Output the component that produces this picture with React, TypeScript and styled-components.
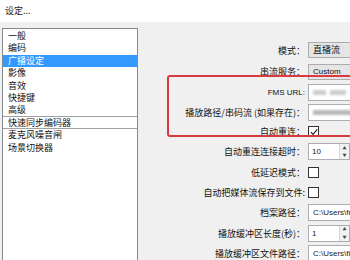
import React from "react";
import styled, { createGlobalStyle } from "styled-components";

const Global = createGlobalStyle`
  html, body {
    margin: 0;
    padding: 0;
    background: #f0f0f0;
  }
  #root {
    width: 350px;
    height: 260px;
    overflow: hidden;
  }
`;

const CJK = `"Noto Sans CJK SC", "Liberation Sans", sans-serif`;
const LATIN = `"Liberation Sans", "Noto Sans CJK SC", sans-serif`;

const navItems = [
  { label: "一般" },
  { label: "编码" },
  { label: "广播设定", active: true },
  { label: "影像" },
  { label: "音效" },
  { label: "快捷键" },
  { label: "高级", divider: true },
  { label: "快速同步编码器", divider: true },
  { label: "麦克风噪音闸" },
  { label: "场景切换器" },
];

const App: React.FC = () => {
  return (
    <Window>
      <Global />
      <TitleBar>设定...</TitleBar>
      <Body>
        <NavList>
          {navItems.map((item) => (
            <NavItem
              key={item.label}
              $active={item.active}
              $divider={item.divider}
            >
              {item.label}
            </NavItem>
          ))}
        </NavList>
        <Form>
          <Label>模式：</Label>
          <Field>
            <Combo>直播流</Combo>
          </Field>

          <Label>串流服务：</Label>
          <Field>
            <Combo $latin>Custom</Combo>
          </Field>

          <Label $latin>FMS URL:</Label>
          <Field>
            <TextBox>
              <Blur $w={13} />
              <Blur $w={16} />
            </TextBox>
          </Field>

          <Label>播放路径/串码流 (如果存在)：</Label>
          <Field>
            <TextBox>
              <Blur $w={40} $dark />
            </TextBox>
          </Field>

          <Label>自动重连：</Label>
          <Field>
            <Check $checked>
              <svg width="8" height="8" viewBox="0 0 8 8">
                <polyline
                  points="0.8,4.2 3,6.4 7.3,1.3"
                  fill="none"
                  stroke="#222"
                  strokeWidth="1.1"
                />
              </svg>
            </Check>
          </Field>

          <Label>自动重连连接超时：</Label>
          <Field>
            <Spin>
              <SpinValue>10</SpinValue>
              <SpinButtons>
                <SpinArrow>▲</SpinArrow>
                <SpinArrow>▼</SpinArrow>
              </SpinButtons>
            </Spin>
          </Field>

          <Label>低延迟模式：</Label>
          <Field>
            <Check />
          </Field>

          <Label>自动把媒体流保存到文件:</Label>
          <Field>
            <Check />
          </Field>

          <Label>档案路径：</Label>
          <Field>
            <TextBox $latin>C:\Users\fr</TextBox>
          </Field>

          <Label>播放缓冲区长度(秒)：</Label>
          <Field>
            <Spin>
              <SpinValue>1</SpinValue>
              <SpinButtons>
                <SpinArrow>▲</SpinArrow>
                <SpinArrow>▼</SpinArrow>
              </SpinButtons>
            </Spin>
          </Field>

          <Label>播放缓冲区文件路径：</Label>
          <Field>
            <TextBox $latin>C:\Users\fi</TextBox>
          </Field>
        </Form>
      </Body>
      <Highlight />
    </Window>
  );
};

const Window = styled.div`
  position: relative;
  width: 350px;
  height: 260px;
  display: flex;
  flex-direction: column;
  background: #f0f0f0;
  color: #111;
  font-family: ${CJK};
  overflow: hidden;
`;

const TitleBar = styled.div`
  height: 22px;
  flex: none;
  background: #fff;
  padding-left: 5px;
  font-size: 9px;
  line-height: 22px;
  color: #222;
`;

const Body = styled.div`
  flex: 1;
  display: flex;
  align-items: flex-start;
  padding-top: 6px;
`;

const NavList = styled.div`
  flex: none;
  width: 134px;
  height: 260px;
  margin-left: 2px;
  padding-top: 1px;
  background: #fff;
  border: 1px solid #828790;
`;

const NavItem = styled.div<{ $active?: boolean; $divider?: boolean }>`
  height: 12.4px;
  box-sizing: border-box;
  padding-left: 5px;
  font-size: 9px;
  line-height: 12px;
  white-space: nowrap;
  color: ${(p) => (p.$active ? "#fff" : "#111")};
  background: ${(p) => (p.$active ? "#3399ff" : "transparent")};
  border-bottom: ${(p) => (p.$divider ? "1px solid #a0a0a0" : "none")};
`;

const Form = styled.div`
  flex: none;
  display: grid;
  grid-template-columns: 167px 90px;
  grid-template-rows: 22px 21px 21px 19px 19px 21px 20px 20px 21px 20px 20px;
  column-gap: 3px;
  margin-top: 11px;
`;

const Label = styled.div<{ $latin?: boolean }>`
  display: flex;
  align-items: center;
  justify-content: flex-end;
  white-space: nowrap;
  font-family: ${(p) => (p.$latin ? LATIN : CJK)};
  font-size: ${(p) => (p.$latin ? "8px" : "9px")};
  color: #111;
`;

const Field = styled.div`
  display: flex;
  align-items: center;
`;

const Combo = styled.div<{ $latin?: boolean }>`
  width: 90px;
  height: 16px;
  box-sizing: border-box;
  padding-left: 4px;
  background: #e5e5e5;
  border: 1px solid #acacac;
  font-family: ${(p) => (p.$latin ? LATIN : CJK)};
  font-size: ${(p) => (p.$latin ? "8px" : "9px")};
  line-height: 14px;
  color: #111;
`;

const TextBox = styled.div<{ $latin?: boolean }>`
  width: 90px;
  height: 17px;
  box-sizing: border-box;
  display: flex;
  align-items: center;
  gap: 4px;
  padding-left: 4px;
  background: #fff;
  border: 1px solid #abadb3;
  font-family: ${(p) => (p.$latin ? LATIN : CJK)};
  font-size: 8px;
  color: #222;
  white-space: nowrap;
`;

const Blur = styled.span<{ $w: number; $dark?: boolean }>`
  display: block;
  width: ${(p) => p.$w}px;
  height: 5px;
  background: ${(p) => (p.$dark ? "#b9b9b9" : "#cdcdcd")};
  filter: blur(1.2px);
`;

const Check = styled.div<{ $checked?: boolean }>`
  width: 11px;
  height: 11px;
  box-sizing: border-box;
  display: flex;
  align-items: center;
  justify-content: center;
  background: #fff;
  border: 1px solid #333;
`;

const Spin = styled.div`
  width: 42px;
  height: 17px;
  box-sizing: border-box;
  display: flex;
  background: #fff;
  border: 1px solid #abadb3;
`;

const SpinValue = styled.div`
  flex: 1;
  padding-left: 3px;
  font-family: ${LATIN};
  font-size: 8px;
  line-height: 15px;
  color: #222;
`;

const SpinButtons = styled.div`
  width: 9px;
  display: flex;
  flex-direction: column;
  border-left: 1px solid #d4d4d4;
  background: #f2f2f2;
`;

const SpinArrow = styled.div`
  flex: 1;
  display: flex;
  align-items: center;
  justify-content: center;
  font-size: 4px;
  line-height: 1;
  color: #444;
`;

const Highlight = styled.div`
  position: absolute;
  left: 167px;
  top: 75px;
  width: 200px;
  height: 62px;
  box-sizing: border-box;
  border: 2px solid #d93a40;
  border-radius: 3px;
  pointer-events: none;
`;

export default App;
